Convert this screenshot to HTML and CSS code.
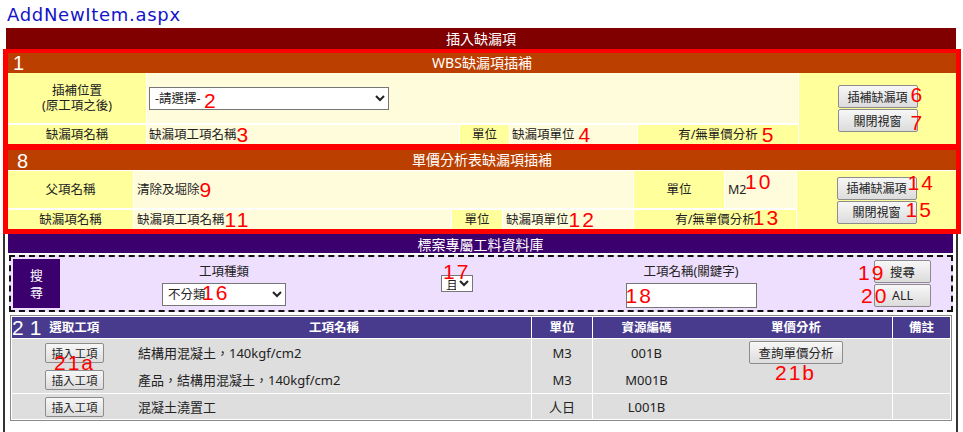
FILE: index.html
```html
<!DOCTYPE html>
<html lang="zh-Hant">
<head>
<meta charset="utf-8">
<title>AddNewItem.aspx</title>
<link rel="stylesheet" href="styles.css">
</head>
<body>
<div class="title">AddNewItem.aspx</div>
<div class="topbar">插入缺漏項</div>

<section class="abox box1">
  <div class="sec-head"><span class="sec-num n1">1</span>WBS缺漏項插補</div>
  <div class="form f1">
    <div class="lbl">插補位置<br>(原工項之後)</div>
    <div class="val f1-pos">
      <div class="rel"><select class="sel sel-pos"><option>-請選擇-</option></select><span class="ann a2">2</span></div>
    </div>
    <div class="lbl btncell f1-btn">
      <div class="rel"><button class="btn btn-wide" type="button">插補缺漏項</button><span class="ann a6">6</span></div>
      <div class="rel"><button class="btn btn-wide" type="button">關閉視窗</button><span class="ann a7">7</span></div>
    </div>
    <div class="lbl">缺漏項名稱</div>
    <div class="val">缺漏項工項名稱<span class="ann-i">3</span></div>
    <div class="lbl">單位</div>
    <div class="val">缺漏項單位<span class="ann-i gap">4</span></div>
    <div class="lbl"><span class="rel">有/無單價分析<span class="ann a5">5</span></span></div>
  </div>
</section>

<section class="abox box8">
  <div class="sec-head"><span class="sec-num n8">8</span>單價分析表缺漏項插補</div>
  <div class="form f8">
    <div class="lbl">父項名稱</div>
    <div class="val f8-parent">清除及堀除<span class="ann-i">9</span></div>
    <div class="lbl">單位</div>
    <div class="val pr">M2<span class="ann a10">10</span></div>
    <div class="lbl btncell f8-btn">
      <div class="rel"><button class="btn btn-wide" type="button">插補缺漏項</button><span class="ann a14">14</span></div>
      <div class="rel"><button class="btn btn-wide" type="button">關閉視窗</button><span class="ann a15">15</span></div>
    </div>
    <div class="lbl">缺漏項名稱</div>
    <div class="val">缺漏項工項名稱<span class="ann-i">11</span></div>
    <div class="lbl">單位</div>
    <div class="val">缺漏項單位<span class="ann-i">12</span></div>
    <div class="lbl f8-ana"><span class="rel">有/無單價分析<span class="ann a13">13</span></span></div>
  </div>
</section>

<div class="db">
  <div class="db-head">標案專屬工料資料庫</div>
  <div class="search">
    <div class="s-label">搜<br>尋</div>
    <div class="s-col">
      <div class="s-cap">工項種類</div>
      <div class="rel"><select class="sel sel-type"><option>不分類</option></select><span class="ann a16">16</span></div>
    </div>
    <div class="s-mid">
      <div class="rel"><select class="sel sel-and"><option>且</option></select><span class="ann a17">17</span></div>
    </div>
    <div class="s-col">
      <div class="s-cap">工項名稱(關鍵字)</div>
      <div class="rel"><input class="in-key" type="text" value=""><span class="ann a18">18</span></div>
    </div>
    <div class="s-btns">
      <div class="rel"><button class="btn btn-s" type="button">搜尋</button><span class="ann a19">19</span></div>
      <div class="rel"><button class="btn btn-s" type="button">ALL</button><span class="ann a20">20</span></div>
    </div>
  </div>

  <div class="tbl">
    <div class="th th-first"><span class="ann-w">21</span>選取工項</div>
    <div class="th">工項名稱</div>
    <div class="th bl">單位</div>
    <div class="th bl">資源編碼</div>
    <div class="th">單價分析</div>
    <div class="th bl">備註</div>

    <div class="td bt pr"><button class="btn btn-ins" type="button">插入工項</button><span class="ann a21a">21a</span></div>
    <div class="td bt name">結構用混凝土，140kgf/cm2</div>
    <div class="td bt bl">M3</div>
    <div class="td bt bl">001B</div>
    <div class="td bt pr"><button class="btn btn-q" type="button">查詢單價分析</button><span class="ann a21b">21b</span></div>
    <div class="td bt bl"></div>

    <div class="td"><button class="btn btn-ins" type="button">插入工項</button></div>
    <div class="td name">產品，結構用混凝土，140kgf/cm2</div>
    <div class="td bl">M3</div>
    <div class="td bl">M001B</div>
    <div class="td"></div>
    <div class="td bl"></div>

    <div class="td bt"><button class="btn btn-ins" type="button">插入工項</button></div>
    <div class="td bt name">混凝土澆置工</div>
    <div class="td bt bl">人日</div>
    <div class="td bt bl">L001B</div>
    <div class="td bt"></div>
    <div class="td bt bl"></div>
  </div>
</div>
</body>
</html>
```

FILE: styles.css
```css
* { box-sizing: border-box; }
html, body { margin: 0; padding: 0; background: #fff; }
body {
  width: 963px;
  height: 432px;
  overflow: hidden;
  font-family: "Noto Sans", "Noto Sans CJK TC", sans-serif;
  font-size: 12.5px;
  color: #222;
}

.title {
  height: 28px;
  padding-left: 7px;
  font-family: "DejaVu Sans", sans-serif;
  font-size: 18px;
  line-height: 29px;
  letter-spacing: 0.7px;
  color: #1414c8;
}

.topbar {
  margin-left: 6px;
  width: 950px;
  height: 21px;
  background: #800000;
  color: #fff;
  font-size: 14px;
  line-height: 21px;
  text-align: center;
}

/* red annotation boxes */
.abox {
  position: relative;
  margin-left: 3px;
  width: 958px;
  border: 4px solid #ff0000;
  border-left-width: 5px;
  border-right-width: 5px;
  background: #fff;
}
.box8 { margin-top: -2px; border-bottom-width: 5px; }

.sec-head {
  position: relative;
  height: 20px;
  background: #bb4000;
  color: #fff;
  font-size: 14px;
  line-height: 20px;
  text-align: center;
}
.sec-num {
  position: absolute;
  top: 0;
  font-family: "Liberation Sans", Arial, sans-serif;
  font-size: 20px;
  line-height: 20px;
}
.n1 { left: 5px; }
.n8 { left: 9px; top: 1px; }

.form {
  display: grid;
  column-gap: 1px;
  row-gap: 2px;
  background: #fff;
}
.f1 {
  grid-template-columns: 138px 312px 49px 127px 160px 1fr;
  grid-template-rows: 50px 19px;
}
.f1-pos { grid-column: 2 / 6; }
.f1-btn { grid-column: 6; grid-row: 1 / span 2; }

.f8 {
  margin-top: 1px;
  grid-template-columns: 125px 317px 50px 130px 90px 71px 1fr;
  grid-template-rows: 37px 19px;
}
.f8-parent { grid-column: 2 / 5; }
.f8-btn { grid-column: 7; grid-row: 1 / span 2; }
.f8-ana { grid-column: 5 / 7; }

.lbl {
  background: #ffff9c;
  display: flex;
  align-items: center;
  justify-content: center;
  text-align: center;
  line-height: 15px;
}
.val {
  background: #fffcdc;
  display: flex;
  align-items: center;
  padding-left: 2px;
  line-height: 15px;
}
.f8 .val { padding-left: 3px; }

.btncell { flex-direction: column; gap: 1px; }

.pr { position: relative; }
.rel { position: relative; }

/* controls */
.btn {
  display: block;
  margin: 0;
  padding: 0;
  font-family: "Noto Sans", "Noto Sans CJK TC", sans-serif;
  font-size: 12px;
  color: #222;
  background: linear-gradient(#f7f7f7, #dcdcdc);
  border: 1px solid #8c8c8c;
  border-radius: 2px;
}
.btn-wide { width: 80px; height: 23px; }
.btn-s { width: 57px; height: 23px; font-size: 12.5px; }
.btn-ins { width: 59px; height: 20px; font-size: 11.5px; }
.btn-q { width: 94px; height: 23px; font-size: 12.5px; }

.sel {
  display: block;
  margin: 0;
  padding: 0 0 0 1px;
  font-family: "Noto Sans", "Noto Sans CJK TC", sans-serif;
  font-size: 12.5px;
  color: #222;
  background: #fff;
  border: 1px solid #767676;
  border-radius: 0;
}
.sel-pos { width: 240px; height: 23px; }
.sel-type { width: 124px; height: 23px; }
.sel-and { width: 32px; height: 17px; font-size: 12px; padding: 0; }

.in-key {
  display: block;
  margin: 0;
  width: 131px;
  height: 25px;
  border: 1px solid #767676;
  background: #fff;
}

/* annotations */
.ann {
  position: absolute;
  z-index: 2;
  font-family: "Liberation Sans", Arial, sans-serif;
  font-size: 21px;
  line-height: 21px;
  letter-spacing: 2px;
  font-weight: normal;
  color: #ff0000;
  white-space: nowrap;
}
.ann-i {
  font-family: "Liberation Sans", Arial, sans-serif;
  font-size: 21px;
  line-height: 0;
  letter-spacing: 2px;
  color: #ff0000;
}
.gap { margin-left: 4px; }
.ann-w {
  font-family: "Liberation Sans", Arial, sans-serif;
  font-size: 21px;
  line-height: 21px;
  letter-spacing: 6px;
  font-weight: normal;
  color: #fff;
  margin-right: 2px;
}

.a2 { left: 55px; top: 3px; }
.a6 { left: 73px; top: -1px; }
.a7 { left: 73px; top: 3px; }
.a5 { left: calc(100% + 4px); top: -3px; }
.a10 { left: 20px; top: 0; }
.a14 { left: 71px; top: -5px; }
.a15 { left: 69px; top: -2px; }
.a13 { left: calc(100% - 2px); top: -5px; }
.a16 { left: 40px; top: -1px; }
.a17 { left: 2px; top: -14px; }
.a18 { left: 0; top: 2px; }
.a19 { left: -16px; top: 2px; }
.a20 { left: -13px; top: 1px; }
.a21a { left: 42px; top: 13px; }
.a21b { left: 75px; top: 23px; }

/* database section */
.db {
  margin-left: 3px;
  width: 955px;
  border-left: 2px solid #333;
  border-right: 2px solid #333;
  padding-bottom: 14px;
}
.db-head {
  margin: 0 3px;
  height: 19px;
  padding-top: 2px;
  background: #3c006e;
  color: #fff;
  font-size: 14px;
  line-height: 17px;
  text-align: center;
}
.search {
  margin: 2px 3px 0 4px;
  height: 57px;
  border: 2px dashed #111;
  background: #efdfff;
  padding: 2px;
  display: grid;
  grid-template-columns: 47px 328px 138px 330px 1fr;
}
.s-label {
  background: #3c006e;
  color: #fff;
  display: flex;
  align-items: center;
  justify-content: center;
  text-align: center;
  font-size: 13px;
  line-height: 17px;
}
.s-col {
  display: flex;
  flex-direction: column;
  align-items: center;
  padding-top: 4px;
}
.s-cap { line-height: 18px; margin-bottom: 2px; }
.s-mid {
  display: flex;
  align-items: center;
  justify-content: center;
}
.s-btns {
  display: flex;
  flex-direction: column;
  align-items: center;
  justify-content: center;
  gap: 1px;
}

/* result table */
.tbl {
  margin: 3px 4px 0 5px;
  border: 1px solid #8a8a8a;
  padding: 1px;
  display: grid;
  grid-template-columns: 125px 394px 61px 108px 192px 1fr;
  grid-template-rows: 21px 28px 27px 26px;
  background: #fff;
}
.th {
  background: #483a8c;
  color: #fff;
  font-weight: bold;
  display: flex;
  align-items: center;
  justify-content: center;
  line-height: 21px;
}
.th-first { justify-content: flex-start; }
.td {
  background: #dedede;
  display: flex;
  align-items: center;
  justify-content: center;
  font-size: 13px;
}
.td.name { justify-content: flex-start; padding-left: 1px; }
.bl { border-left: 1px solid #fff; }
.bt { border-top: 1px solid #fff; }
```
